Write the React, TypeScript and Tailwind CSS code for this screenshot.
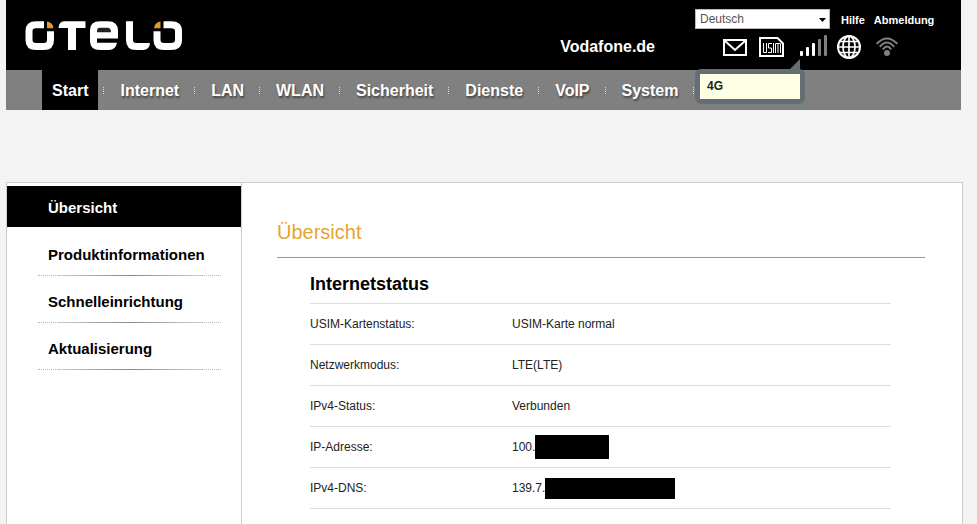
const navItems = ["Start", "Internet", "LAN", "WLAN", "Sicherheit", "Dienste", "VoIP", "System"];
const sideItems = ["Produktinformationen", "Schnelleinrichtung", "Aktualisierung"];
const statusRows = [
  { label: "USIM-Kartenstatus:", value: "USIM-Karte normal", mask: "" },
  { label: "Netzwerkmodus:", value: "LTE(LTE)", mask: "" },
  { label: "IPv4-Status:", value: "Verbunden", mask: "" },
  { label: "IP-Adresse:", value: "100.", mask: "h-6 w-[74px]" },
  { label: "IPv4-DNS:", value: "139.7.", mask: "h-[21px] w-[130px]" },
];

function Logo() {
  return (
    <svg width="158" height="30" viewBox="25 21 158 30" role="img" aria-label="otelo">
      <g fill="none" stroke="#fff" strokeWidth="7">
        <path d="M44 24.7H36Q29 24.7 29 31V40Q29 46.5 36 46.5H44Q50.5 46.5 50.5 40V31.3" />
        <path d="M163.5 24.7H171Q178.500 24.7 178.500 31V40Q178.500 46.500 171 46.500H164Q157 46.500 157 40V31.300" />
        <path d="M129.500 21.300V40Q129.500 46.500 136 46.500H144" />
      </g>
      <path d="M64 21.300H85.500V28H76V50H68V28H58.500Q59 21.300 64 21.300Z" fill="#fff" />
      <path d="M100 21.300H108Q118 21.300 118 31V38.500H97V42.700H117Q115.500 50 109 50H100Q90 50 90 41V30Q90 21.300 100 21.300Z" fill="#fff" />
      <path d="M97 32.300V31Q97 27.800 100 27.800H107.500Q111 27.800 111 32.300Z" fill="#222" />
      <path d="M141 43H150Q149.500 50 143 50H141Z" fill="#fff" />
      <path d="M47 21.500Q53 22.500 53.500 28.200H47Z" fill="#e09a3e" />
      <path d="M160.500 21.500Q154.500 22.500 154 28.200H160.500Z" fill="#e09a3e" />
    </svg>
  );
}

function MailIcon() {
  return (
    <svg width="24" height="17" viewBox="0 0 24 17" fill="none" stroke="#fff" strokeWidth="2" aria-hidden="true">
      <path d="M1 1H23V16H1ZM2 2L12 11L22 2" />
    </svg>
  );
}

function UsimIcon() {
  return (
    <svg width="25" height="20" viewBox="0 0 25 20" fill="none" stroke="#fff" aria-hidden="true">
      <path d="M1 1H18.500L24 6.500V19H1Z" strokeWidth="2" />
      <path d="M4.500 6V15.500H7.500V6M13 6.500H9.500V11H12.500V15.500H9M14.500 6V16M16.500 16V6.500H21.500V16M19 6.500V16" />
    </svg>
  );
}

function SignalIcon() {
  return (
    <svg width="27" height="22" viewBox="0 0 27 22" aria-hidden="true">
      <g fill="#fff">
        <rect x="0" y="16" width="3" height="5" rx="1" />
        <rect x="6" y="12" width="3" height="9" rx="1" />
        <rect x="12" y="8" width="3" height="13" rx="1" />
      </g>
      <g fill="#808080">
        <rect x="18" y="4" width="3" height="17" rx="1" />
        <rect x="24" y="0" width="3" height="21" rx="1" />
      </g>
    </svg>
  );
}

function GlobeIcon() {
  return (
    <svg width="24" height="24" viewBox="0 0 24 24" fill="none" stroke="#fff" strokeWidth="1.700" aria-hidden="true">
      <circle cx="12" cy="12" r="11" strokeWidth="2" />
      <ellipse cx="12" cy="12" rx="6" ry="11" />
      <path d="M12 1V23M1 12H23M3 6.500H21M3 17.500H21" />
    </svg>
  );
}

function WifiIcon() {
  return (
    <svg width="22" height="20" viewBox="0 0 22 20" fill="none" stroke="#808080" strokeWidth="2" aria-hidden="true">
      <path d="M0.700 6.800Q11 -4 21.300 6.800M3.800 9.900Q11 1 18.200 9.900M6.800 12.500Q11 6.500 15.200 12.500" />
      <circle cx="11" cy="16" r="3" fill="#808080" stroke="none" />
    </svg>
  );
}

function SideDivider() {
  return (
    <span className="flex h-px">
      <span className="w-5 border-t border-dotted border-[#bbb]" />
      <span className="flex-1 bg-linear-to-r from-[#ccc] via-[#888] to-[#ccc]" />
      <span className="w-5 border-t border-dotted border-[#bbb]" />
    </span>
  );
}

export default function App() {
  return (
    <div className="flex h-screen flex-col overflow-hidden bg-[#f3f3f3] pr-3.5 pl-1.5 font-['Liberation_Sans',Arial,sans-serif] text-black">
      <header className="mr-0.5 shrink-0">
        <div className="flex h-[70px] justify-between bg-black pr-[23px] pl-[19px] text-white">
          <a href="#start" className="mt-[21px]">
            <Logo />
          </a>
          <div className="flex">
            <a href="#vodafone" className="mt-[37px] mr-10 text-base leading-5 font-bold">
              Vodafone.de
            </a>
            <div className="w-[243px] pt-[9px]">
              <div className="flex h-5 items-center text-[11px] font-bold">
                <div className="relative mr-[11px]">
                  <select
                    aria-label="Sprache"
                    className="block h-5 w-[135px] appearance-none border border-[#bbb] bg-white pl-1 text-xs font-normal text-[#555]"
                  >
                    <option>Deutsch</option>
                    <option>English</option>
                  </select>
                  <svg width="7" height="4" className="pointer-events-none absolute top-[9px] right-1" aria-hidden="true">
                    <path d="M0 0H7L3.500 4Z" fill="#000" />
                  </svg>
                </div>
                <a href="#hilfe" className="mr-[9px] pt-0.5">
                  Hilfe
                </a>
                <a href="#abmeldung" className="pt-0.5">
                  Abmeldung
                </a>
              </div>
              <div className="mt-1.5 flex items-center pl-7">
                <a href="#sms" aria-label="Nachrichten" className="mr-3">
                  <MailIcon />
                </a>
                <a href="#usim" aria-label="USIM" className="mr-4">
                  <UsimIcon />
                </a>
                <div className="relative mr-2.5 self-start">
                  <SignalIcon />
                  <div role="tooltip" className="absolute top-[34px] -left-[105px] z-10 w-[110px] rounded-md bg-[#646e75] p-[5px]">
                    <svg width="10" height="11" className="absolute -top-2.5 right-[5px]" aria-hidden="true">
                      <path d="M10 0V11H0V10Z" fill="#646e75" />
                    </svg>
                    <p className="bg-[#ffffe6] px-[7px] text-xs leading-[25px] font-bold text-[#222]">4G</p>
                  </div>
                </div>
                <a href="#internet" aria-label="Internet" className="mr-[15px]">
                  <GlobeIcon />
                </a>
                <a href="#wlan" aria-label="WLAN">
                  <WifiIcon />
                </a>
              </div>
            </div>
          </div>
        </div>
        <nav className="flex h-10 bg-[#808080] pl-9">
          {navItems.map((item) => (
            <div key={item} className="flex items-center">
              <a
                href={"#" + item.toLowerCase()}
                className={
                  item === "Start"
                    ? "bg-black px-2.5 pt-0.5 text-base leading-[38px] font-bold text-white"
                    : "px-2.5 pt-0.5 text-base leading-[38px] font-bold text-white [text-shadow:1px_2px_2px_#444]"
                }
              >
                {item}
              </a>
              <span className="mr-1.5 ml-[5px] h-[7px] border-l border-dotted border-[#ddd]" />
            </div>
          ))}
        </nav>
      </header>

      <div className="mt-[72px] flex flex-1 border border-b-0 border-[#ccc] bg-white">
        <aside className="w-[235px] shrink-0 border-r border-[#ccc] pt-[3px]">
          <a href="#uebersicht" className="mb-0.5 block bg-black pt-[3px] pl-[41px] text-[15px] leading-[38px] font-bold text-white">
            Übersicht
          </a>
          {sideItems.map((item) => (
            <a key={item} href={"#" + item.toLowerCase()} className="block pr-5 pl-[31px] text-[15px] font-bold">
              <span className="block pt-[5px] pl-2.5 leading-[41px]">{item}</span>
              <SideDivider />
            </a>
          ))}
        </aside>
        <main className="flex-1 pt-[37px] pr-[37px] pl-[35px]">
          <h1 className="border-b border-[#999] pb-[13px] text-xl leading-6 text-[#e5a52d]">Übersicht</h1>
          <section className="pt-3.5 pr-[34px] pl-[33px]">
            <h2 className="border-b border-[#ddd] pb-[7px] text-lg leading-6 font-bold">Internetstatus</h2>
            <table className="w-full border-separate border-spacing-0 text-xs text-[#222]">
              <tbody>
                {statusRows.map((row) => (
                  <tr key={row.label}>
                    <th scope="row" className="h-[41px] w-[202px] border-b border-[#ddd] p-0 text-left font-normal">
                      {row.label}
                    </th>
                    <td className="border-b border-[#ddd] p-0">
                      <div className="flex items-center">
                        {row.value}
                        {row.mask && <span className={"bg-black " + row.mask} />}
                      </div>
                    </td>
                  </tr>
                ))}
              </tbody>
            </table>
          </section>
        </main>
      </div>
    </div>
  );
}
